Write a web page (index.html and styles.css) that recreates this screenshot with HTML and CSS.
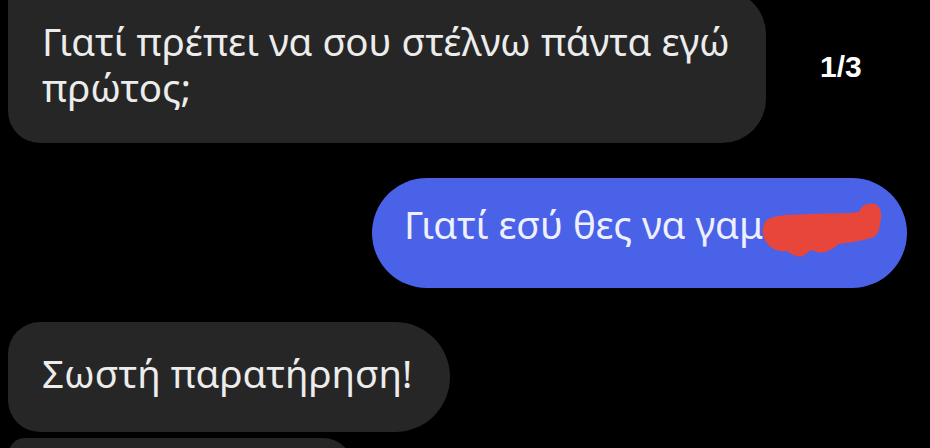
FILE: index.html
```html
<!DOCTYPE html>
<html lang="el">
<head>
<meta charset="utf-8">
<title>Chat</title>
<link rel="stylesheet" href="styles.css">
</head>
<body>
<main class="chat">
  <div class="row row-first">
    <div class="bubble bubble-in bubble-top">Γιατί πρέπει να σου στέλνω πάντα εγώ<br>πρώτος;</div>
    <div class="counter">1/3</div>
  </div>
  <div class="row row-out">
    <div class="bubble bubble-out"><span class="out-text">Γιατί εσύ θες να γαμ</span><svg class="scribble" width="122" height="58" viewBox="0 0 122 58" aria-hidden="true"><path d="M4 20 C10 12 30 13 50 12 C70 11 88 12 98 10 C100 3 108 0 114 2 C121 5 121 14 119 22 C118 30 116 34 110 36 C100 39 90 40 78 42 C70 48 64 52 56 50 C50 46 48 50 42 54 C36 56 30 52 26 49 C16 50 8 46 4 38 C1 32 1 26 4 20 Z" fill="#e9463b"/></svg></div>
  </div>
  <div class="row">
    <div class="bubble bubble-in bubble-mid">Σωστή παρατήρηση!</div>
  </div>
  <div class="row">
    <div class="bubble bubble-in bubble-next"></div>
  </div>
</main>
</body>
</html>
```
FILE: styles.css
```css
html, body {
  margin: 0;
  padding: 0;
  background: #000;
  overflow: hidden;
  height: 448px;
}
.chat {
  display: flex;
  flex-direction: column;
  padding: 0 8px;
  font-family: "Noto Sans", "DejaVu Sans", sans-serif;
}
.row {
  display: flex;
  align-items: flex-start;
}
.row-first {
  margin-top: -10px;
}
.bubble {
  box-sizing: border-box;
  font-size: 38.5px;
  line-height: 46px;
  color: #ececec;
  white-space: nowrap;
}
.bubble-in {
  background: #262626;
  padding: 28px 34px 33px 34px;
}
.bubble-top {
  width: 758px;
  flex: none;
  border-radius: 0 44px 44px 32px;
}
.counter {
  margin-left: 54px;
  margin-top: 60px;
  font-family: "Liberation Sans", Arial, sans-serif;
  font-weight: bold;
  font-size: 30px;
  color: #fff;
}
.row-out {
  justify-content: flex-end;
  margin-top: 35px;
  padding-right: 15px;
}
.bubble-out {
  background: #4a62e8;
  color: #eef0ff;
  height: 110px;
  border-radius: 55px;
  padding: 23px 24px 0 32px;
  display: flex;
  align-items: flex-start;
}
.scribble {
  margin-top: 1px;
  margin-left: -2px;
}
.bubble-mid {
  margin-top: 34px;
  height: 110px;
  padding-top: 28px;
  padding-right: 38px;
  border-radius: 32px 55px 55px 32px;
}
.bubble-next {
  margin-top: 6px;
  width: 345px;
  height: 60px;
  padding: 0;
  border-radius: 32px 55px 55px 32px;
}
```
